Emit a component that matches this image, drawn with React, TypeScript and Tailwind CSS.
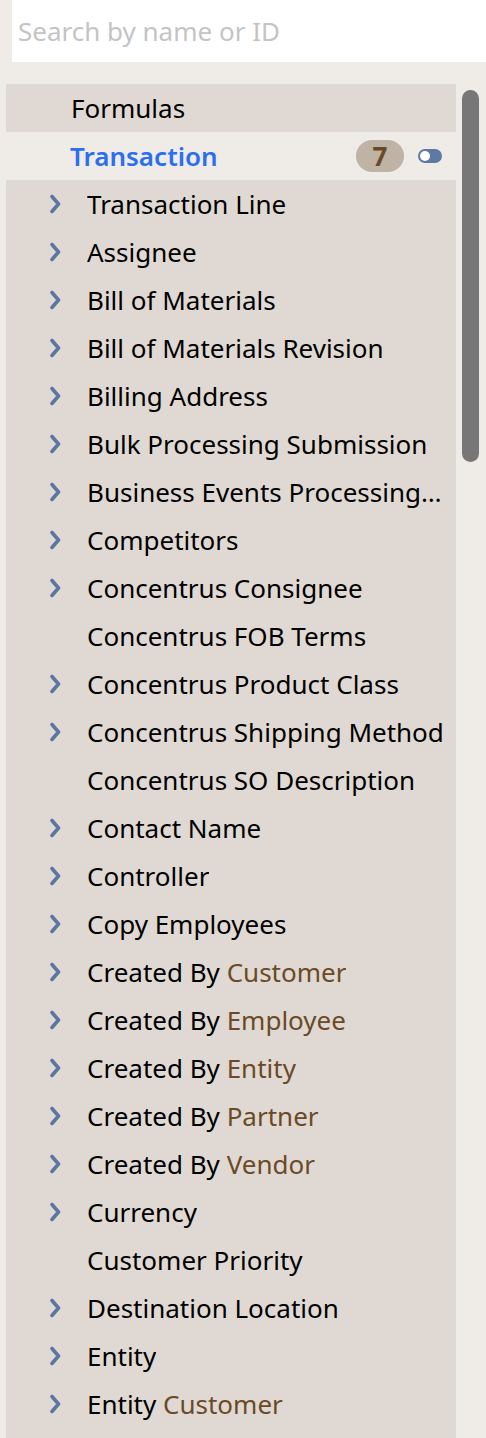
import React, { FC } from "react";

type Item = {
  label: string;
  accent?: string;
  expandable: boolean;
};

const items: Item[] = [
  { label: "Transaction Line", expandable: true },
  { label: "Assignee", expandable: true },
  { label: "Bill of Materials", expandable: true },
  { label: "Bill of Materials Revision", expandable: true },
  { label: "Billing Address", expandable: true },
  { label: "Bulk Processing Submission", expandable: true },
  { label: "Business Events Processing Submission", expandable: true },
  { label: "Competitors", expandable: true },
  { label: "Concentrus Consignee", expandable: true },
  { label: "Concentrus FOB Terms", expandable: false },
  { label: "Concentrus Product Class", expandable: true },
  { label: "Concentrus Shipping Method", expandable: true },
  { label: "Concentrus SO Description", expandable: false },
  { label: "Contact Name", expandable: true },
  { label: "Controller", expandable: true },
  { label: "Copy Employees", expandable: true },
  { label: "Created By", accent: "Customer", expandable: true },
  { label: "Created By", accent: "Employee", expandable: true },
  { label: "Created By", accent: "Entity", expandable: true },
  { label: "Created By", accent: "Partner", expandable: true },
  { label: "Created By", accent: "Vendor", expandable: true },
  { label: "Currency", expandable: true },
  { label: "Customer Priority", expandable: false },
  { label: "Destination Location", expandable: true },
  { label: "Entity", expandable: true },
  { label: "Entity", accent: "Customer", expandable: true },
];

const Chevron: FC = () => (
  <svg width="14" height="20" viewBox="0 0 14 20" className="shrink-0">
    <path d="M4 2.5 L10.5 10 L4 17.5" fill="none" stroke="#5b77a1" strokeWidth="3.6" strokeLinecap="round" strokeLinejoin="round" />
  </svg>
);

const Row: FC<{ item: Item }> = ({ item }) => (
  <div className="flex h-12 items-center pr-3">
    <div className="flex w-[81px] shrink-0 justify-end pr-[25px]">
      {item.expandable && <Chevron />}
    </div>
    <span className="truncate leading-[36px] text-black">
      {item.label}
      {item.accent && <span className="text-[#6b4a27]"> {item.accent}</span>}
    </span>
  </div>
);

export default function App() {
  return (
    <div
      className="h-[1438px] overflow-hidden bg-[#efece7] text-[26px] leading-none"
      style={{ fontFamily: '"Noto Sans", "Open Sans", sans-serif' }}
    >
      <div className="ml-3 flex h-[62px] items-center bg-white pl-[6px]">
        <span className="text-[#c4c4c4]">Search by name or ID</span>
      </div>

      <div className="mt-[22px] flex pl-[6px]">
        <div className="w-[450px] shrink-0">
          <div className="flex h-12 items-center bg-[#e0d9d3] pl-[65px] text-black">Formulas</div>
          <div className="flex h-12 items-center pl-[64px] pr-[14px]">
            <span className="font-semibold text-[#2b6ff0]">Transaction</span>
            <span className="ml-auto flex h-8 w-12 items-center justify-center rounded-full bg-[#beb3a5] font-bold text-[#6a4a25]">
              7
            </span>
            <span className="ml-[14px] flex h-[14px] w-6 items-center rounded-full bg-[#5e7aa3] pl-[2px]">
              <span className="h-[10px] w-[10px] rounded-full bg-white" />
            </span>
          </div>
          <div className="bg-[#e0d9d3] pb-4">
            {items.map((item, i) => (
              <Row key={i} item={item} />
            ))}
          </div>
        </div>
        <div className="flex-1 pl-[6px] pt-[6px]">
          <div className="h-[372px] w-[17px] rounded-full bg-[#777777]" />
        </div>
      </div>
    </div>
  );
}
